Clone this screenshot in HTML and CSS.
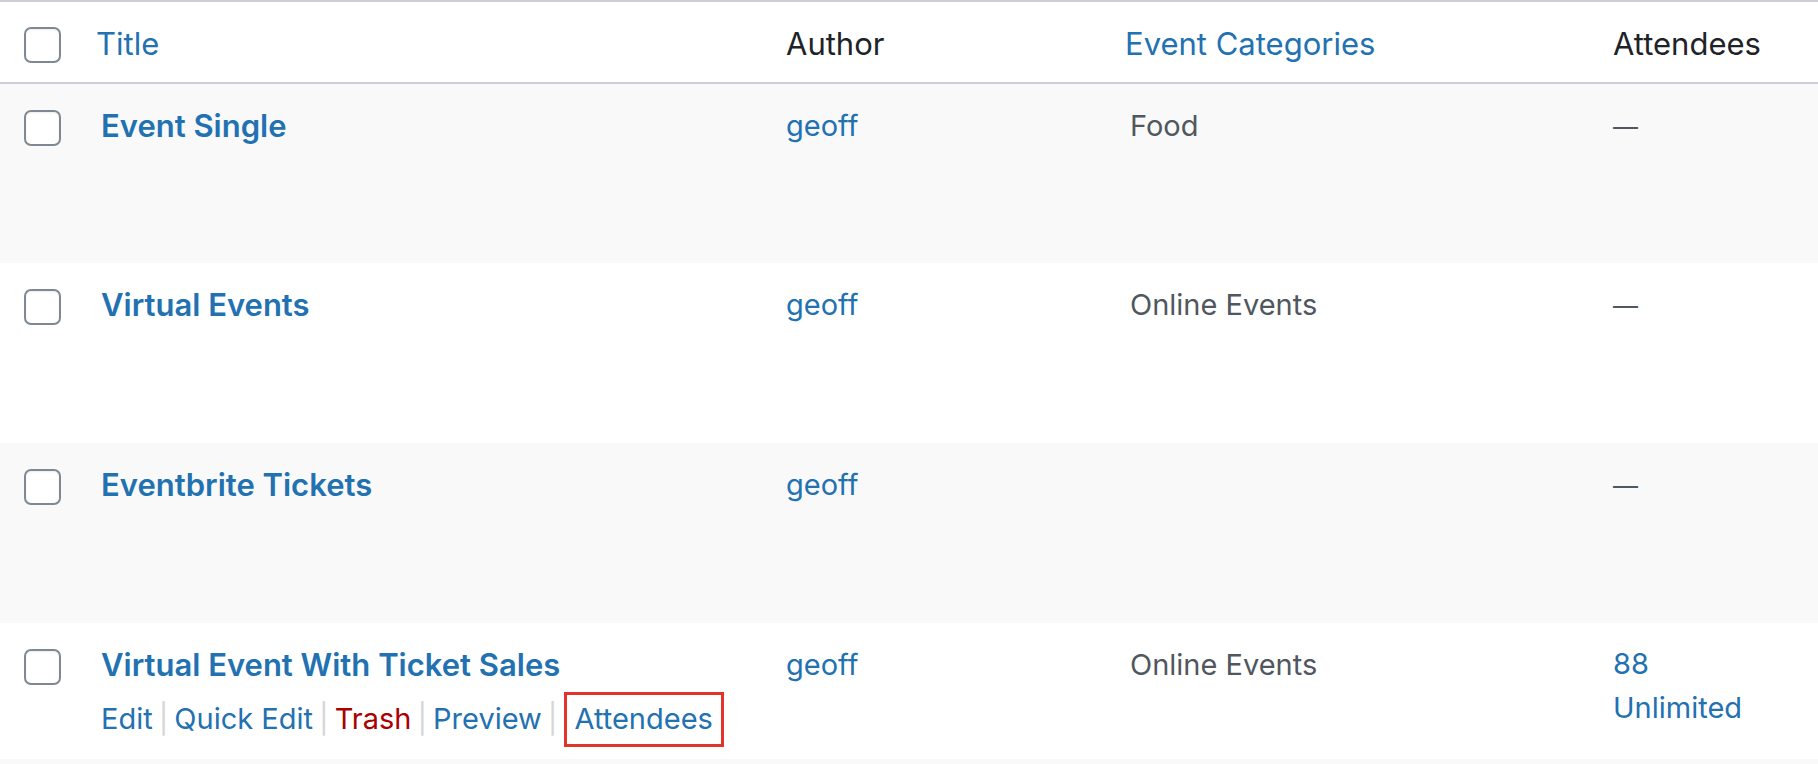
FILE: index.html
```html
<!DOCTYPE html>
<html lang="en">
<head>
    <meta charset="UTF-8">
    <meta name="viewport" content="width=device-width, initial-scale=1.0">
    <title>Events</title>
    <link rel="stylesheet" href="styles.css">
</head>
<body>
    <table class="posts">
        <colgroup>
            <col class="w-cb">
            <col class="w-title">
            <col class="w-author">
            <col class="w-cats">
            <col class="w-att">
        </colgroup>
        <thead>
            <tr>
                <td class="cb"><span class="check"></span></td>
                <th class="sortable"><a href="#">Title</a></th>
                <th>Author</th>
                <th class="sortable"><a href="#">Event Categories</a></th>
                <th>Attendees</th>
            </tr>
        </thead>
        <tbody>
            <tr class="alt">
                <td class="cb"><span class="check"></span></td>
                <td class="title"><a href="#">Event Single</a></td>
                <td><a href="#">geoff</a></td>
                <td>Food</td>
                <td><span class="none">&mdash;</span></td>
            </tr>
            <tr>
                <td class="cb"><span class="check"></span></td>
                <td class="title"><a href="#">Virtual Events</a></td>
                <td><a href="#">geoff</a></td>
                <td>Online Events</td>
                <td><span class="none">&mdash;</span></td>
            </tr>
            <tr class="alt">
                <td class="cb"><span class="check"></span></td>
                <td class="title"><a href="#">Eventbrite Tickets</a></td>
                <td><a href="#">geoff</a></td>
                <td></td>
                <td><span class="none">&mdash;</span></td>
            </tr>
            <tr class="last">
                <td class="cb"><span class="check"></span></td>
                <td class="title">
                    <a href="#">Virtual Event With Ticket Sales</a>
                    <div class="row-actions">
                        <a href="#">Edit</a><span class="sep">|</span><a href="#">Quick Edit</a><span class="sep">|</span><a href="#" class="trash">Trash</a><span class="sep">|</span><a href="#">Preview</a><span class="sep">|</span><a href="#" class="marked">Attendees</a>
                    </div>
                </td>
                <td><a href="#">geoff</a></td>
                <td>Online Events</td>
                <td class="att"><a href="#">88</a><br><a href="#">Unlimited</a></td>
            </tr>
            <tr class="alt">
                <td colspan="5"></td>
            </tr>
        </tbody>
    </table>
</body>
</html>
```
FILE: styles.css
```css
*{
    margin: 0;
    padding: 0;
    box-sizing: border-box;
}
body{
    background: #fff;
    font-family: Inter, "Noto Sans", sans-serif;
    font-size: 29px;
    color: #50575e;
}
a{
    color: #2271b1;
    text-decoration: none;
}
.posts{
    width: 1818px;
    border-collapse: collapse;
    table-layout: fixed;
    border-top: 2px solid #ccd0d4;
}
.w-cb{ width: 91px; }
.w-title{ width: 685px; }
.w-author{ width: 344px; }
.w-cats{ width: 483px; }
.w-att{ width: 215px; }

/* header row */
.posts thead tr{
    height: 82px;
    border-bottom: 2px solid #ccd0d4;
}
.posts th{
    font-size: 31px;
    font-weight: 400;
    text-align: left;
    color: #1d2327;
    padding: 22px 10px 0;
    line-height: 40px;
    vertical-align: top;
}
.posts th.sortable a{
    margin-left: -5px;
}
.posts thead .cb{
    padding-top: 25px;
}
.check{
    display: block;
    width: 37px;
    height: 36px;
    margin-left: 14px;
    border: 2px solid #7e8993;
    border-radius: 7px;
    background: #fff;
    box-shadow: inset 0 1px 2px rgba(0,0,0,.08);
}

/* body rows */
.posts tbody tr{
    height: 180px;
}
.posts tbody tr.last{
    height: 136px;
}
.posts tbody tr.alt{
    background: #f9f9f9;
}
.posts td{
    vertical-align: top;
    padding: 22px 10px 0;
    line-height: 40px;
}
.posts tbody .cb{
    padding-top: 26px;
}
.posts td.title > a{
    font-size: 31px;
    font-weight: 600;
}
.none{
    font-size: 25px;
    color: #50575e;
}
.posts td.att{
    padding-top: 19px;
    line-height: 44px;
}

/* links under the last title */
.row-actions{
    margin-top: 6px;
    line-height: 40px;
}
.row-actions .sep{
    color: #d5d6d8;
    margin: 0 6px;
}
.row-actions .trash{
    color: #a00;
}
.row-actions .marked{
    display: inline-block;
    padding: 4px 8px 5px;
    border: 3px solid #e1352b;
}
```
